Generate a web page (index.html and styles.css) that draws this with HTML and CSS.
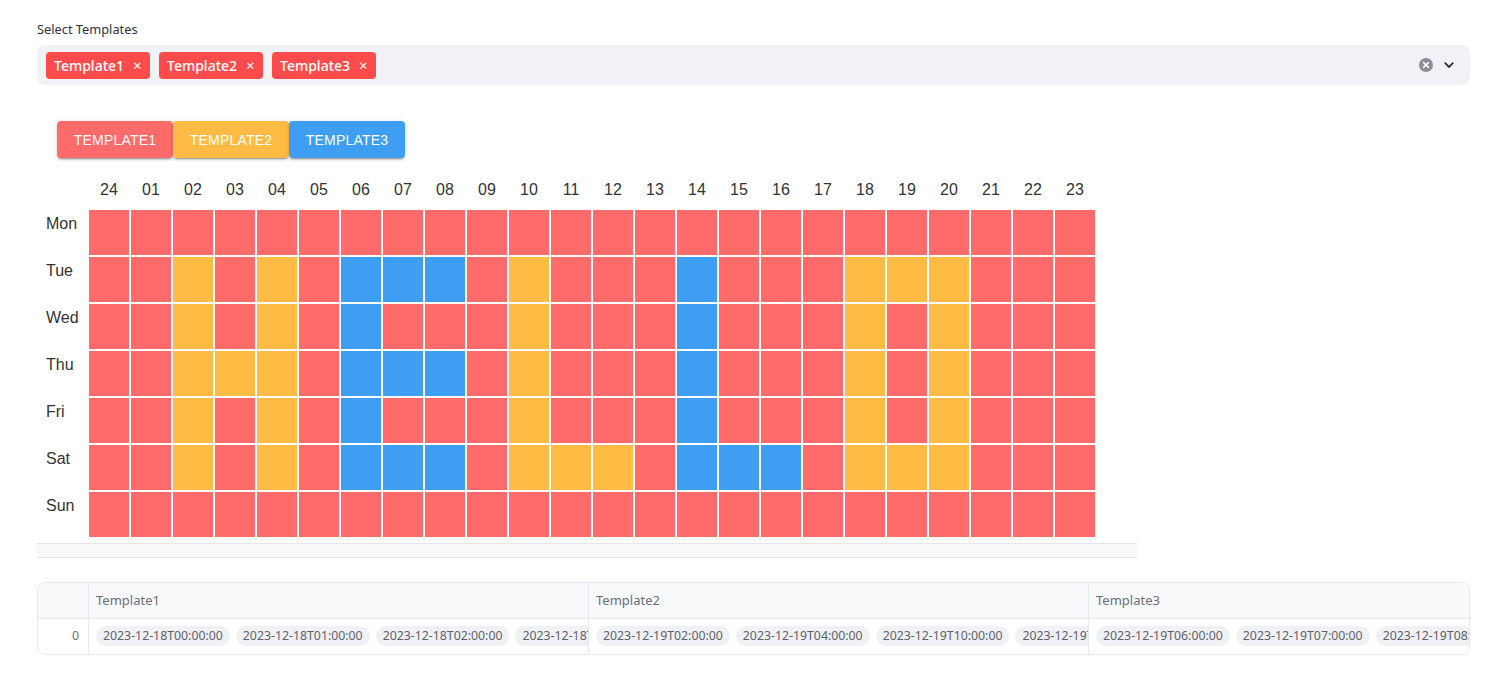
FILE: index.html
```html
<!DOCTYPE html>
<html lang="en">
<head>
    <meta charset="UTF-8">
    <meta name="viewport" content="width=device-width, initial-scale=1.0">
    <title>Template Schedule</title>
    <link rel="stylesheet" href="styles.css">
</head>
<body>
    <div class="page">
        <div class="field-label">Select Templates</div>
        <div class="multiselect">
            <div class="tags">
                <span class="tag">Template1 <span class="tag-x">&times;</span></span>
                <span class="tag">Template2 <span class="tag-x">&times;</span></span>
                <span class="tag">Template3 <span class="tag-x">&times;</span></span>
            </div>
            <div class="ms-icons">
                <svg class="clear-icon" width="14" height="14" viewBox="0 0 14 14">
                    <circle cx="7" cy="7" r="7" fill="#8b8d96"/>
                    <path d="M4.6 4.6 L9.4 9.4 M9.4 4.6 L4.6 9.4" stroke="#fff" stroke-width="1.6" stroke-linecap="round"/>
                </svg>
                <svg class="chevron" width="12" height="12" viewBox="0 0 12 12">
                    <path d="M2.2 4.2 L6 8 L9.8 4.2" fill="none" stroke="#31333f" stroke-width="1.8" stroke-linecap="round" stroke-linejoin="round"/>
                </svg>
            </div>
        </div>

        <div class="frame">
            <div class="legend">
                <button class="legend-btn t1">Template1</button>
                <button class="legend-btn t2">Template2</button>
                <button class="legend-btn t3">Template3</button>
            </div>
            <div class="schedule" id="schedule">
                <!-- cells are built by the script below -->
            </div>
            <div class="scroll-track"></div>
        </div>

        <div class="data-table">
            <div class="dt-row dt-head">
                <div class="dt-index"></div>
                <div class="dt-cell">Template1</div>
                <div class="dt-cell">Template2</div>
                <div class="dt-cell dt-last">Template3</div>
            </div>
            <div class="dt-row">
                <div class="dt-index">0</div>
                <div class="dt-cell">
                    <span class="pill">2023-12-18T00:00:00</span>
                    <span class="pill">2023-12-18T01:00:00</span>
                    <span class="pill">2023-12-18T02:00:00</span>
                    <span class="pill">2023-12-18T03:00:00</span>
                </div>
                <div class="dt-cell">
                    <span class="pill">2023-12-19T02:00:00</span>
                    <span class="pill">2023-12-19T04:00:00</span>
                    <span class="pill">2023-12-19T10:00:00</span>
                    <span class="pill">2023-12-19T14:00:00</span>
                </div>
                <div class="dt-cell dt-last">
                    <span class="pill">2023-12-19T06:00:00</span>
                    <span class="pill">2023-12-19T07:00:00</span>
                    <span class="pill">2023-12-19T08:00:00</span>
                </div>
            </div>
        </div>
    </div>

    <script>
        document.addEventListener('DOMContentLoaded', () => {
            const hours = ['24'];
            for (let h = 1; h < 24; h++) {
                hours.push(String(h).padStart(2, '0'));
            }
            const days = ['Mon', 'Tue', 'Wed', 'Thu', 'Fri', 'Sat', 'Sun'];

            // 1 = template1, 2 = template2, 3 = template3
            const rows = [
                '111111111111111111111111',
                '112121333121113111222111',
                '112121311121113111212111',
                '112221333121113111212111',
                '112121311121113111212111',
                '112121333122213331222111',
                '111111111111111111111111'
            ];

            const schedule = document.getElementById('schedule');
            let html = '<div class="corner"></div>';
            hours.forEach(h => {
                html += `<div class="hour">${h}</div>`;
            });
            days.forEach((day, i) => {
                html += `<div class="day">${day}</div>`;
                rows[i].split('').forEach(t => {
                    html += `<div class="slot t${t}"></div>`;
                });
            });
            schedule.innerHTML = html;
        });
    </script>
</body>
</html>
```

FILE: styles.css
```css
body {
    margin: 0;
    font-family: "Noto Sans", sans-serif;
    color: #31333f;
    background-color: #fff;
}
.page {
    padding: 19px 30px 0 37px;
}
.field-label {
    font-size: 12.8px;
    line-height: 20px;
    height: 20px;
    margin-bottom: 6px;
}
.multiselect {
    height: 40px;
    background-color: #f0f2f6;
    border-radius: 8px;
    display: flex;
    align-items: center;
    justify-content: space-between;
    padding: 0 15px 0 9px;
}
.tags {
    display: flex;
    gap: 9px;
}
.tag {
    display: flex;
    align-items: center;
    height: 27px;
    width: 104px;
    box-sizing: border-box;
    padding: 0 0 0 8px;
    background-color: #ff4b4b;
    color: #fff;
    border-radius: 4px;
    font-size: 14px;
    font-weight: 500;
}
.tag-x {
    margin-left: 9px;
    font-size: 15px;
    font-weight: 400;
}
.ms-icons {
    display: flex;
    align-items: center;
    gap: 10px;
}
.frame {
    width: 1100px;
    margin-top: 36px;
}
.legend {
    display: flex;
    padding-left: 20px;
}
.legend-btn {
    width: 116px;
    height: 37px;
    border: none;
    border-radius: 4px;
    color: #fff;
    font-family: "Liberation Sans", Arial, sans-serif;
    font-size: 14px;
    text-transform: uppercase;
    letter-spacing: 0.2px;
    box-shadow: 0 3px 1px -2px rgba(0, 0, 0, 0.2), 0 2px 2px 0 rgba(0, 0, 0, 0.14), 0 1px 5px 0 rgba(0, 0, 0, 0.12);
}
.legend-btn.t1 {
    background-color: #ff6b6b;
}
.legend-btn.t2 {
    background-color: #ffbb44;
}
.legend-btn.t3 {
    background-color: #3e9ef2;
}
.schedule {
    display: grid;
    grid-template-columns: 41px repeat(24, 40px);
    grid-template-rows: 32px repeat(7, 45px);
    gap: 2px;
    margin-top: 18px;
    padding-left: 9px;
    font-family: "Liberation Sans", Arial, sans-serif;
    font-size: 16px;
    color: #333;
}
.hour {
    text-align: center;
    padding-top: 5px;
    line-height: 18px;
}
.day {
    padding-top: 5px;
    line-height: 18px;
}
.slot.t1 {
    background-color: #ff6b6b;
}
.slot.t2 {
    background-color: #ffbb44;
}
.slot.t3 {
    background-color: #3e9ef2;
}
.scroll-track {
    margin-top: 6px;
    height: 13px;
    background-color: #f9f9f9;
    border-top: 1px solid #e6e6e6;
    border-bottom: 1px solid #e6e6e6;
}
.data-table {
    margin-top: 24px;
    border: 1px solid #e6e9ef;
    border-radius: 8px;
    overflow: hidden;
    font-size: 12.3px;
    color: #6b6e78;
}
.dt-row {
    display: flex;
    height: 35px;
}
.dt-head {
    background-color: #f8f9fb;
    border-bottom: 1px solid #e6e9ef;
}
.dt-index {
    width: 51px;
    flex: none;
    box-sizing: border-box;
    border-right: 1px solid #e6e9ef;
    text-align: right;
    padding-right: 9px;
    line-height: 34px;
}
.dt-cell {
    width: 500px;
    flex: none;
    box-sizing: border-box;
    border-right: 1px solid #e6e9ef;
    padding: 0 0 1px 7px;
    display: flex;
    align-items: center;
    gap: 6px;
    overflow: hidden;
    white-space: nowrap;
}
.dt-head .dt-cell {
    font-size: 13px;
}
.dt-last {
    flex: 1;
    border-right: none;
}
.pill {
    flex: none;
    background-color: #eff1f4;
    border-radius: 10px;
    height: 20px;
    line-height: 20px;
    padding: 0 7px;
    color: #5f626c;
}
```
